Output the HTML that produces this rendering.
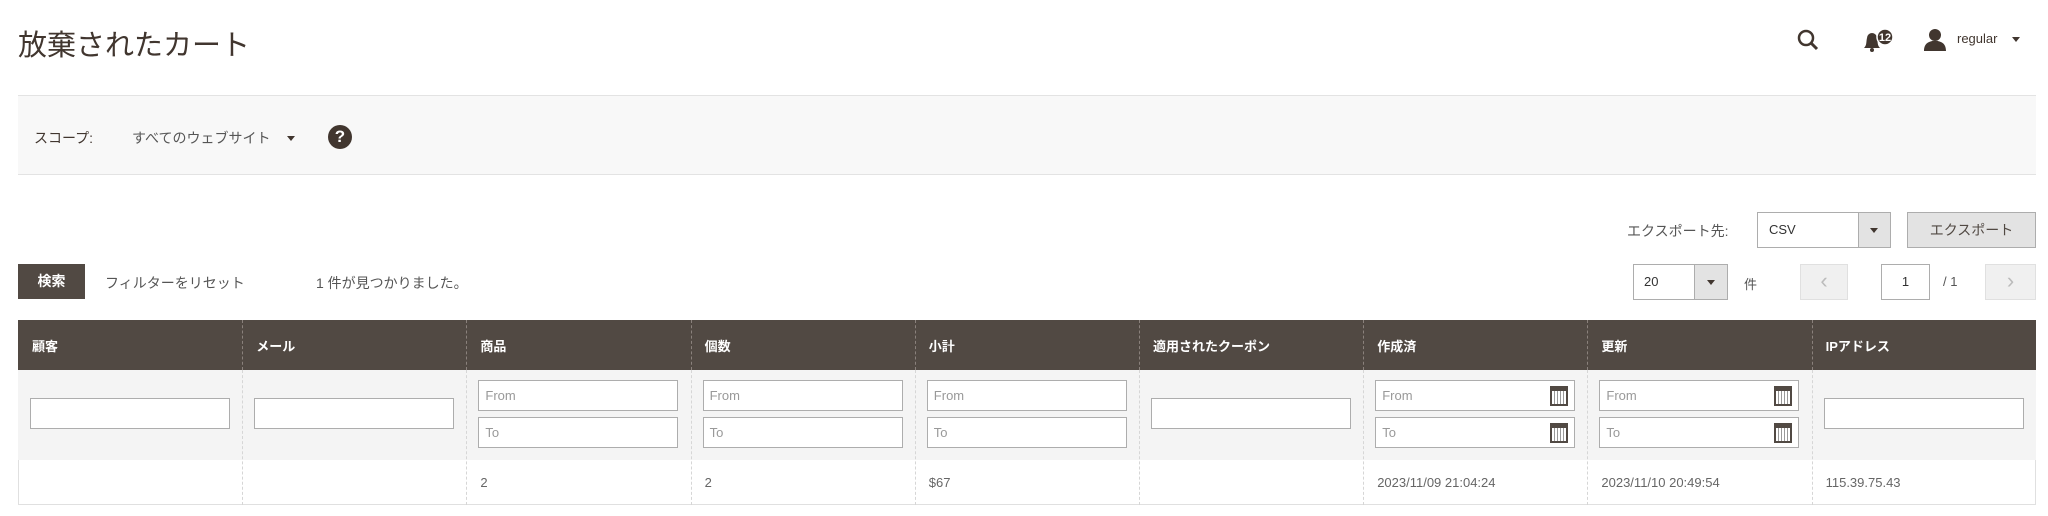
<!DOCTYPE html>
<html><head><meta charset="utf-8"><style>
*{box-sizing:border-box;margin:0;padding:0}
body{width:2048px;height:516px;background:#fff;font-family:"Liberation Sans","Noto Sans CJK JP",sans-serif;color:#303030;position:relative;overflow:hidden}
.a{position:absolute}
.t{font-size:13px;color:#333}
.inp{position:absolute;background:#fff;border:1px solid #adadad;height:31px;font-size:13px;color:#999;padding:7px 6px}
.col{position:absolute;top:370px;height:135px;border-left:1px dashed #d6d6d6}
.cal{position:absolute;right:6px;top:5px;width:18px;height:20px;border:2px solid #514943;border-top-width:5px;background:repeating-linear-gradient(90deg,#fff 0 2px,#999 2px 3px),#fff}
</style></head><body>
<div class="a" style="left:18px;top:22px;font-size:29px;color:#41362f">放棄されたカート</div>
<svg class="a" style="left:1797px;top:29px" width="22" height="22" viewBox="0 0 22 22"><circle cx="9" cy="9" r="7" fill="none" stroke="#41362f" stroke-width="2.5"/><path d="M14 14l6 6" stroke="#41362f" stroke-width="3"/></svg>
<svg class="a" style="left:1860px;top:28px" width="36" height="26" viewBox="0 0 36 26"><path d="M4 20c3-3 2-6 3-10a5 5 0 0 1 10 0c1 4 0 7 3 10z" fill="#41362f"/><circle cx="12" cy="22" r="2" fill="#41362f"/><circle cx="25" cy="9" r="8" fill="#41362f" stroke="#fff" stroke-width="1.5"/><text x="25" y="13" font-size="11" font-weight="bold" fill="#fff" text-anchor="middle" font-family="Liberation Sans">12</text></svg>
<svg class="a" style="left:1924px;top:28px" width="22" height="24" viewBox="0 0 22 24"><circle cx="11" cy="7" r="6" fill="#41362f"/><path d="M0 23c0-8 5-9 8-10h6c3 1 8 2 8 10z" fill="#41362f"/></svg>
<div class="a t" style="left:1957px;top:31px;color:#41362f">regular</div>
<div class="a" style="left:2012px;top:37px;border:4px solid transparent;border-top:5px solid #41362f"></div>

<div class="a" style="left:18px;top:95px;width:2018px;height:80px;background:#f8f8f8;border-top:1px solid #e3e3e3;border-bottom:1px solid #e3e3e3"></div>
<div class="a" style="left:34px;top:128px;font-size:14px;color:#41362f">スコープ:</div>
<div class="a" style="left:132px;top:128px;font-size:14px;color:#555">すべてのウェブサイト</div>
<div class="a" style="left:287px;top:136px;border:4px solid transparent;border-top:5px solid #41362f"></div>
<div class="a" style="left:328px;top:125px;width:24px;height:24px;border-radius:50%;background:#41362f;color:#fff;font-weight:bold;font-size:17px;text-align:center;line-height:24px">?</div>

<div class="a" style="left:1627px;top:221px;color:#555;font-size:14px">エクスポート先:</div>
<div class="a" style="left:1757px;top:212px;width:134px;height:36px;border:1px solid #adadad;background:#fff"></div>
<div class="a t" style="left:1769px;top:222px">CSV</div>
<div class="a" style="left:1858px;top:213px;width:32px;height:34px;background:#e3e3e3;border-left:1px solid #adadad"></div>
<div class="a" style="left:1870px;top:228px;border:4px solid transparent;border-top:5px solid #41362f"></div>
<div class="a" style="left:1907px;top:212px;width:129px;height:36px;background:#e3e3e3;border:1px solid #adadad;font-size:14px;text-align:center;line-height:34px;color:#514943">エクスポート</div>

<div class="a" style="left:18px;top:264px;width:67px;height:35px;background:#514943;color:#fff;font-weight:bold;font-size:14px;text-align:center;line-height:35px">検索</div>
<div class="a" style="left:105px;top:273px;color:#555;font-size:14px">フィルターをリセット</div>
<div class="a" style="left:316px;top:273px;color:#555;font-size:14px">1 件が見つかりました。</div>

<div class="a" style="left:1633px;top:264px;width:95px;height:36px;border:1px solid #adadad;background:#fff"></div>
<div class="a t" style="left:1644px;top:274px">20</div>
<div class="a" style="left:1694px;top:265px;width:33px;height:34px;background:#e3e3e3;border-left:1px solid #adadad"></div>
<div class="a" style="left:1707px;top:280px;border:4px solid transparent;border-top:5px solid #41362f"></div>
<div class="a t" style="left:1744px;top:274px;color:#555">件</div>
<div class="a" style="left:1800px;top:264px;width:48px;height:36px;background:#f0f0f0;border:1px solid #e0e0e0;color:#bbb;font-size:22px;text-align:center;line-height:32px">‹</div>
<div class="a" style="left:1881px;top:264px;width:49px;height:36px;border:1px solid #adadad;text-align:center;line-height:34px;font-size:13px">1</div>
<div class="a t" style="left:1943px;top:274px;color:#555">/ 1</div>
<div class="a" style="left:1985px;top:264px;width:51px;height:36px;background:#f0f0f0;border:1px solid #e0e0e0;color:#bbb;font-size:22px;text-align:center;line-height:32px">›</div>

<div class="a" style="left:18px;top:320px;width:2018px;height:50px;background:#514943"></div>
<div class="a" style="left:18px;top:370px;width:2018px;height:90px;background:#f4f4f4"></div>
<div class="a" style="left:18px;top:460px;width:2018px;height:45px;background:#fff;border-bottom:1px solid #e0e0e0;border-left:1px solid #e0e0e0;border-right:1px solid #e0e0e0"></div>

<div id="g"></div>
<script>
var h=["顧客","メール","商品","個数","小計","適用されたクーポン","作成済","更新","IPアドレス"];
var type=[0,0,1,1,1,0,2,2,0];
var d=["","","2","2","$67","","2023/11/09 21:04:24","2023/11/10 20:49:54","115.39.75.43"];
var s="";
for(var i=0;i<9;i++){var x=18+i*224.2;
if(i>0){s+='<div class="a" style="left:'+x+'px;top:320px;height:50px;border-left:1px dashed #8a817c"></div><div class="col" style="left:'+x+'px"></div>';}
s+='<div class="a" style="left:'+(x+14)+'px;top:336px;color:#fff;font-weight:bold;font-size:13px">'+h[i]+'</div>';
var w=200;
if(type[i]==0){s+='<div class="inp" style="left:'+(x+12)+'px;top:398px;width:'+w+'px"></div>';}
else{var c=type[i]==2?'<div class="cal"></div>':'';
s+='<div class="inp" style="left:'+(x+12)+'px;top:380px;width:'+w+'px">From'+c+'</div>';
s+='<div class="inp" style="left:'+(x+12)+'px;top:417px;width:'+w+'px">To'+c+'</div>';}
s+='<div class="a t" style="left:'+(x+14)+'px;top:475px;color:#666">'+d[i]+'</div>';}
document.getElementById("g").innerHTML=s;
</script>
</body></html>
